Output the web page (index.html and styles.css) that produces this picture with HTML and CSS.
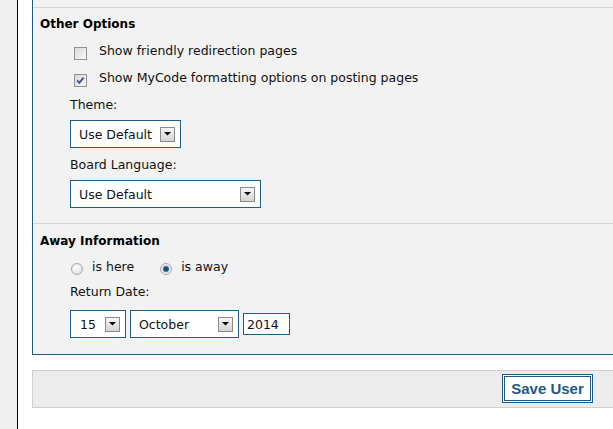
FILE: index.html
```html
<!DOCTYPE html>
<html>
<head>
<meta charset="utf-8">
<title>Edit User</title>
<link rel="stylesheet" href="styles.css">
</head>
<body>
<div class="page">
  <div class="side"></div>
  <div class="main">
    <div class="panel">
      <div class="prev-row"></div>
      <div class="row first">
        <div class="heading">Other Options</div>
        <div class="fields">
          <div class="check-row"><span class="checkbox"></span><span>Show friendly redirection pages</span></div>
          <div class="check-row"><span class="checkbox"><svg width="11" height="11" viewBox="0 0 11 11"><path d="M2.2 5.4 L4.3 7.8 L8.6 2.6" fill="none" stroke="#3d4f8c" stroke-width="1.8"/></svg></span><span>Show MyCode formatting options on posting pages</span></div>
          <div class="label">Theme:</div>
          <div class="select sel-theme"><span>Use Default</span><span class="arrow"><svg width="7" height="4" viewBox="0 0 7 4"><polygon points="0,0 7,0 3.5,3.5" fill="#000"/></svg></span></div>
          <div class="label label-lang">Board Language:</div>
          <div class="select sel-lang"><span>Use Default</span><span class="arrow"><svg width="7" height="4" viewBox="0 0 7 4"><polygon points="0,0 7,0 3.5,3.5" fill="#000"/></svg></span></div>
        </div>
      </div>
      <div class="row last">
        <div class="heading">Away Information</div>
        <div class="fields">
          <div class="radio-row">
            <span class="radio"></span><span>is here</span>
            <span class="radio radio-second checked"></span><span>is away</span>
          </div>
          <div class="label label-date">Return Date:</div>
          <div class="date-row">
            <div class="select sel-day"><span>15</span><span class="arrow"><svg width="7" height="4" viewBox="0 0 7 4"><polygon points="0,0 7,0 3.5,3.5" fill="#000"/></svg></span></div>
            <div class="select sel-month"><span>October</span><span class="arrow"><svg width="7" height="4" viewBox="0 0 7 4"><polygon points="0,0 7,0 3.5,3.5" fill="#000"/></svg></span></div>
            <input class="year" type="text" value="2014">
          </div>
        </div>
      </div>
    </div>
    <div class="actions"><button class="save" type="button">Save User</button></div>
  </div>
</div>
</body>
</html>
```
FILE: styles.css
```css
html, body {
  margin: 0;
  padding: 0;
  overflow: hidden;
  background: #fff;
}
body {
  font-family: "DejaVu Sans", Verdana, sans-serif;
  font-size: 12.5px;
  color: #111;
}
.page {
  display: flex;
  width: 100%;
  min-height: 100vh;
}
.side {
  flex: none;
  width: 17px;
  background: #f0f0f0;
  border-right: 1px solid #000;
}
.main {
  flex: 1;
  min-width: 0;
  padding-left: 14px;
}
.panel {
  background: #f2f2f2;
  border-left: 1px solid #1f5e87;
  border-bottom: 1px solid #1f5e87;
}
.prev-row {
  height: 7px;
  border-bottom: 1px solid #d6d6d6;
}
.row {
  padding: 8px 0 15px 7px;
  border-bottom: 1px solid #d6d6d6;
}
.row.last {
  border-bottom: none;
  padding-top: 9px;
  padding-bottom: 16px;
}
.heading {
  font-weight: bold;
  font-size: 12px;
  line-height: 16px;
  color: #000;
}
.fields {
  margin-left: 30px;
  margin-top: 5px;
  display: flex;
  flex-direction: column;
  align-items: flex-start;
}
.row.last .fields {
  margin-top: 4px;
}
.check-row {
  display: flex;
  align-items: flex-start;
  height: 27px;
  line-height: 27px;
}
.checkbox {
  flex: none;
  width: 13px;
  height: 13px;
  box-sizing: border-box;
  margin: 10px 12px 0 4px;
  border: 1px solid #8f9090;
  background: linear-gradient(135deg, #d8d8d8, #f9f9f9);
  display: flex;
  align-items: center;
  justify-content: center;
}
.label {
  line-height: 27px;
}
.label-lang {
  margin-top: 3px;
}
.label-date {
  line-height: 24px;
}
.select {
  display: flex;
  align-items: center;
  justify-content: space-between;
  box-sizing: border-box;
  height: 28px;
  margin-top: 2px;
  padding: 0 5px 0 8px;
  border: 1px solid #1f5e87;
  background: #fff;
}
.sel-theme { width: 111px; }
.sel-lang { width: 191px; }
.arrow {
  flex: none;
  width: 15px;
  height: 15px;
  box-sizing: border-box;
  border: 1px solid #8a8a8a;
  background: linear-gradient(#f6f6f6, #d4d4d4);
  display: flex;
  align-items: center;
  justify-content: center;
}
.arrow svg {
  display: block;
}
.radio-row {
  display: flex;
  align-items: flex-start;
  height: 27px;
  line-height: 27px;
}
.radio {
  flex: none;
  width: 12px;
  height: 12px;
  box-sizing: border-box;
  margin: 10px 9px 0 1px;
  border-radius: 50%;
  border: 1px solid #a6a6a6;
  background: radial-gradient(circle at 40% 35%, #fdfdfd, #d9d9d9);
}
.radio-second {
  margin-left: 26px;
}
.radio.checked {
  background: radial-gradient(circle at 50% 50%, #0e3b57 0, #1d5a7c 2px, #5d9bbb 3px, #e3e3e3 3.6px, #f4f4f4 5px);
}
.date-row {
  display: flex;
  align-items: center;
  gap: 4px;
  margin-top: 6px;
}
.date-row .select {
  margin-top: 0;
}
.sel-day {
  width: 56px;
  padding-left: 9px;
}
.sel-month {
  width: 109px;
}
.year {
  box-sizing: border-box;
  width: 47px;
  height: 22px;
  margin: 0;
  padding: 0 0 0 3px;
  border: 1px solid #1f5e87;
  background: #fff;
  font: inherit;
  color: #111;
  outline: none;
}
.actions {
  display: flex;
  justify-content: flex-end;
  margin-top: 15px;
  padding: 3px 20px 4px 0;
  background: #ececec;
  border: 1px solid #cfcfcf;
  border-right: none;
}
.save {
  box-sizing: border-box;
  width: 91px;
  height: 29px;
  padding: 0;
  margin: 0;
  border: 3px double #1e5a85;
  background: #fff;
  color: #1e5a85;
  font-family: "Liberation Sans", Arial, sans-serif;
  font-weight: bold;
  font-size: 15px;
}
```
